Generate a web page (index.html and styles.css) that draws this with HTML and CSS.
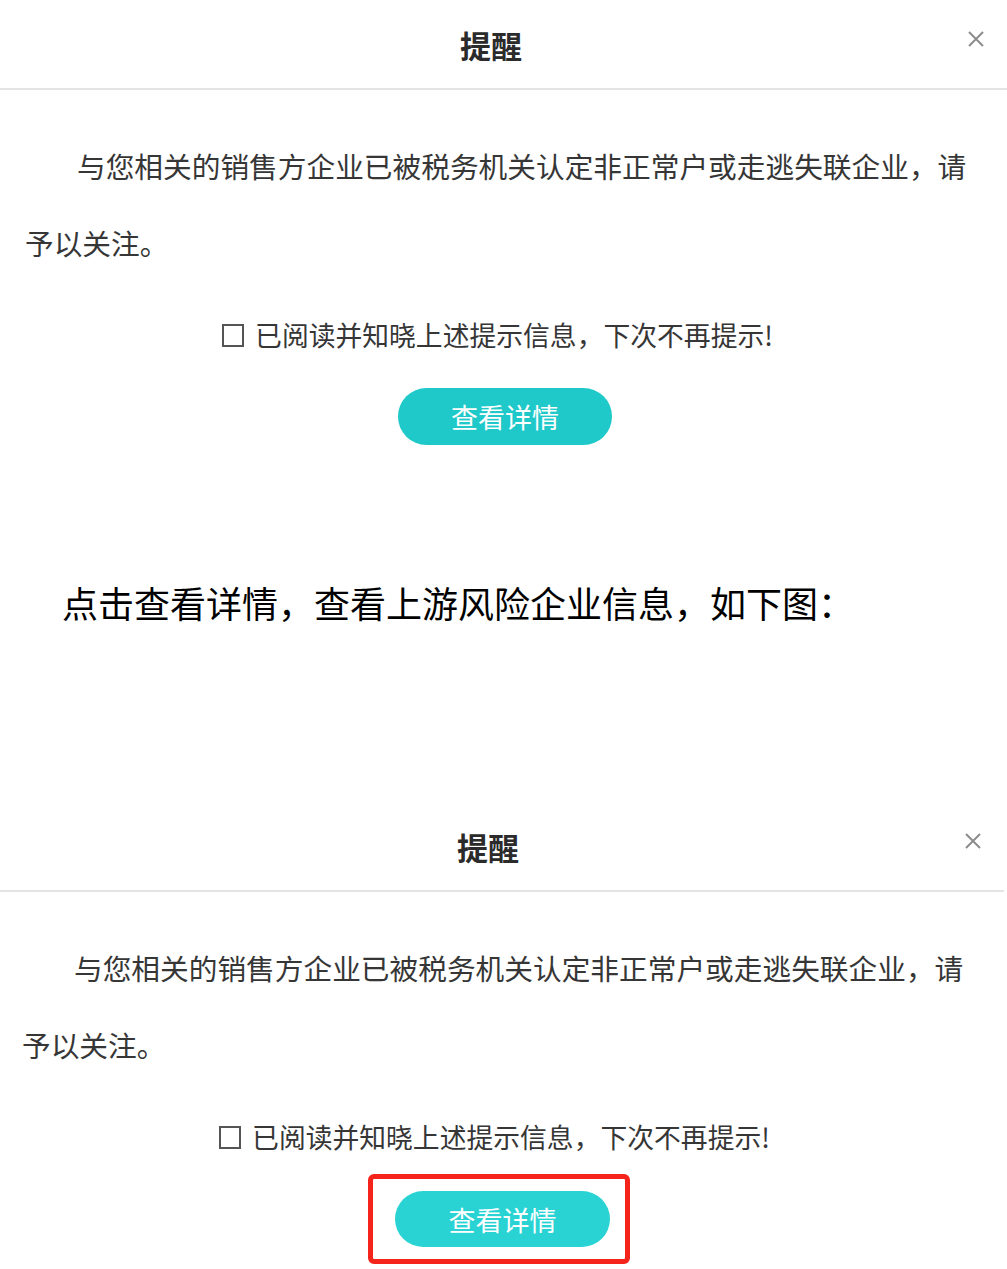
FILE: index.html
```html
<!DOCTYPE html>
<html lang="zh-CN">
<head>
<meta charset="utf-8">
<title>提醒</title>
<link rel="stylesheet" href="styles.css">
</head>
<body>
<main class="page">
  <section class="dialog">
    <header class="dlg-head">
      <h2 class="dlg-title">提醒</h2>
      <button class="dlg-close" aria-label="关闭">
        <svg viewBox="0 0 18 18" width="18" height="18"><path d="M2 2L16 16M16 2L2 16" stroke="#8c8c8c" stroke-width="2" fill="none"/></svg>
      </button>
    </header>
    <div class="dlg-body">
      <p class="dlg-msg">与您相关的销售方企业已被税务机关认定非正常户或走逃失联企业，请予以关注。</p>
      <label class="dlg-check"><span class="check-box"></span><span>已阅读并知晓上述提示信息，下次不再提示!</span></label>
      <div class="dlg-actions"><button class="btn">查看详情</button></div>
    </div>
  </section>

  <p class="caption">点击查看详情，查看上游风险企业信息，如下图：</p>

  <section class="dialog dialog--lower">
    <header class="dlg-head">
      <h2 class="dlg-title">提醒</h2>
      <button class="dlg-close" aria-label="关闭">
        <svg viewBox="0 0 18 18" width="18" height="18"><path d="M2 2L16 16M16 2L2 16" stroke="#8c8c8c" stroke-width="2" fill="none"/></svg>
      </button>
    </header>
    <div class="dlg-body">
      <p class="dlg-msg">与您相关的销售方企业已被税务机关认定非正常户或走逃失联企业，请予以关注。</p>
      <label class="dlg-check"><span class="check-box"></span><span>已阅读并知晓上述提示信息，下次不再提示!</span></label>
      <div class="dlg-actions dlg-actions--marked">
        <div class="mark-frame"><button class="btn btn--light">查看详情</button></div>
      </div>
    </div>
  </section>
</main>
</body>
</html>
```

FILE: styles.css
```css
* { box-sizing: border-box; margin: 0; padding: 0; }
html, body { background: #fff; }
body {
  width: 1007px;
  height: 1269px;
  overflow: hidden;
  font-family: "Noto Sans CJK SC", "Noto Sans", sans-serif;
  color: #333;
}
.page { width: 1007px; }

.dialog { width: 1007px; }
.dialog--lower { margin-left: -3px; margin-top: 175px; }

.dlg-head {
  display: grid;
  grid-template-columns: 1fr auto 1fr;
  align-items: center;
  height: 90px;
  border-bottom: 2px solid #e4e4e4;
  padding-right: 25px;
}
.dlg-title {
  grid-column: 2;
  font-size: 31px;
  font-weight: 700;
  line-height: 1;
  color: #2b2b2b;
}
.dlg-close {
  grid-column: 3;
  justify-self: end;
  align-self: start;
  margin-top: 30px;
  margin-right: -3px;
  width: 18px;
  height: 18px;
  border: 0;
  background: none;
  display: block;
}
.dlg-close svg { display: block; }

.dlg-body { padding-top: 37px; }
.dlg-msg {
  font-size: 28.7px;
  line-height: 77px;
  text-indent: 52px;
  padding: 0 30px 0 25px;
  color: #363636;
}
.dlg-check {
  display: flex;
  align-items: center;
  justify-content: center;
  gap: 11px;
  font-size: 26.8px;
  line-height: 40px;
  margin-top: 34px;
  padding-right: 12px;
  color: #363636;
}
.check-box {
  width: 22px;
  height: 23px;
  border: 2px solid #555;
  flex: none;
}
.dlg-actions {
  display: flex;
  justify-content: center;
  margin-top: 33px;
  padding-left: 3px;
}
.btn {
  width: 214px;
  height: 57px;
  border-radius: 29px;
  border: 0;
  background: #1fc9c9;
  color: #fff;
  font-family: inherit;
  font-size: 27px;
  line-height: 57px;
}
.btn--light { width: 215px; height: 56px; background: #2ad3d3; }

.dlg-actions--marked { margin-top: 17px; padding-left: 0; padding-right: 3px; }
.mark-frame {
  border: 5px solid #f4241b;
  border-radius: 6px;
  padding: 12px 15px 12px 22px;
}

.caption {
  font-size: 36px;
  line-height: 50px;
  color: #000;
  margin-top: 132px;
  padding-left: 62px;
}
```
